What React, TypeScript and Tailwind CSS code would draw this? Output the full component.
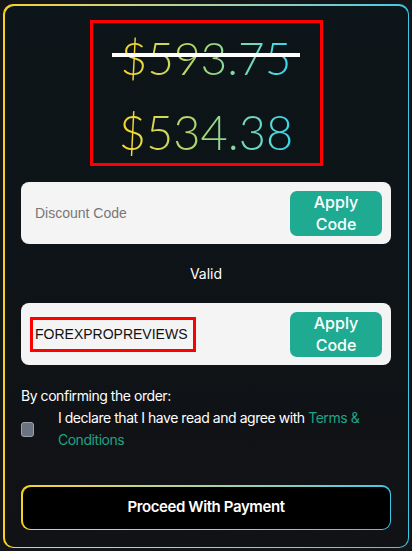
import React from "react";

const gradText =
  "bg-gradient-to-r from-[#fcd718] via-[#9fd67a] to-[#2ad8f0] bg-clip-text text-transparent";

function CodeRow({ children }: { children: React.ReactNode }) {
  return (
    <div className="h-[62px] rounded-[8px] bg-[#f4f4f4] flex items-center justify-between pl-[9px] pr-[9px]">
      <div className="flex items-center">{children}</div>
      <button className="w-[92px] h-[45px] rounded-[7px] bg-[#1fab91] text-white text-[16px] leading-[22px] font-medium font-['Inter',sans-serif] flex flex-col items-center justify-center">
        <span>Apply</span>
        <span>Code</span>
      </button>
    </div>
  );
}

export default function App() {
  return (
    <div className="min-h-[551px] bg-[#131519] pt-[4px] pl-[3px]">
      <div className="w-[406px] h-[544px] rounded-[10px] p-[1.5px] bg-gradient-to-r from-[#f7d21a] to-[#3cc8e6]">
        <div className="h-full rounded-[9px] bg-gradient-to-b from-[#0c1519] to-[#111215] px-[16.5px] pt-[14.5px] font-['Inter',sans-serif]">
          <div className="mx-auto w-[233px] h-[146px] border-[3px] border-[#ff0000] flex flex-col items-center font-['Lato',sans-serif] font-light">
            <div className="relative mt-[7px] h-[56px] flex items-center">
              <span className={`${gradText} text-[46px] leading-[56px]`}>$593.75</span>
              <span className="absolute left-[-9px] right-[-9px] top-[23px] h-[4px] bg-white" />
            </div>
            <div className="mt-[18px] h-[56px] flex items-center">
              <span className={`${gradText} text-[47px] leading-[56px]`}>$534.38</span>
            </div>
          </div>

          <div className="mt-[16px]">
            <CodeRow>
              <span className="pl-[5px] text-[14px] text-[#777] font-['Liberation_Sans',sans-serif]">
                Discount Code
              </span>
            </CodeRow>
          </div>

          <div className="h-[59px] flex items-center justify-center text-white text-[14px]">Valid</div>

          <CodeRow>
            <div className="h-[35px] border-[3px] border-[#ff0000] flex items-center pl-[2px] pr-[6px]">
              <span className="text-[14px] text-[#111] font-['Liberation_Sans',sans-serif]">
                FOREXPROPREVIEWS
              </span>
            </div>
          </CodeRow>

          <div className="mt-[20px] text-white text-[14px] leading-[22px] tracking-[-0.45px]">
            By confirming the order:
          </div>
          <div className="flex items-center">
            <div className="w-[15px] h-[15px] rounded-[3px] bg-[#6b7280] border border-[#9ca3af]" />
            <div className="ml-[24px] pr-[22px] text-white text-[14px] leading-[22px] tracking-[-0.45px]">
              I declare that I have read and agree with{" "}
              <span className="text-[#1fa385]">Terms &amp; Conditions</span>
            </div>
          </div>

          <div className="mt-[34px] h-[45px] rounded-[9px] p-[1.5px] bg-gradient-to-r from-[#f7d21a] to-[#3cc8e6]">
            <button className="w-full h-full rounded-[8px] bg-black text-white text-[15px] font-semibold tracking-[-0.4px]">
              Proceed With Payment
            </button>
          </div>
        </div>
      </div>
    </div>
  );
}
